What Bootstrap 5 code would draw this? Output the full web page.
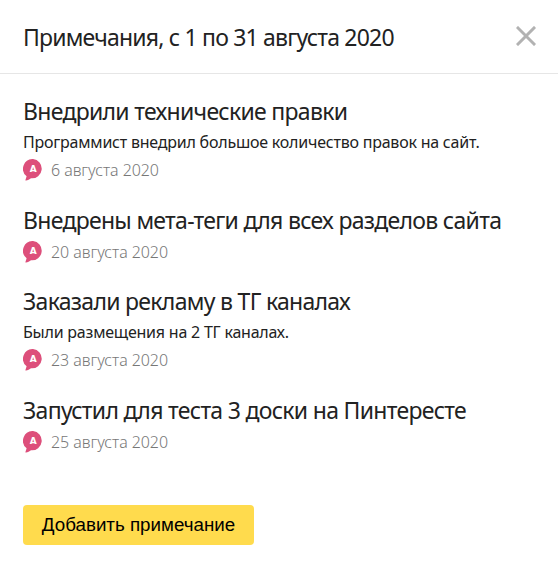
<!DOCTYPE html>
<html lang="ru">
<head>
<meta charset="utf-8">
<meta name="viewport" content="width=device-width, initial-scale=1">
<title>Примечания</title>
<link href="https://cdn.jsdelivr.net/npm/bootstrap@5.3.0/dist/css/bootstrap.min.css" rel="stylesheet">
<style>
body { font-family: "Noto Sans", "Open Sans", sans-serif; color: #222; background: #fff; }
.notes-header { height: 74px; padding: 0 22px 2px 23px; border-bottom: 1px solid #e6e6e6; }
.notes-title, .note-title { font-size: 23px; font-weight: 400; line-height: 30px; white-space: nowrap; letter-spacing: -.8px; }
.notes-title { padding-top: 2px; }
.note-title { letter-spacing: -.7px; margin-bottom: 3px; }
.notes-list { padding: 22px 23px 0; }
.note { padding-bottom: 20.5px; }
.note-text { font-size: 16px; line-height: 27px; letter-spacing: -.22px; white-space: nowrap; }
.note-date { font-size: 16px; line-height: 28px; font-weight: 300; color: #777; letter-spacing: -.06px; }
.close-btn { width: 20px; height: 20px; }
.add-btn { height: 40px; width: 231px; margin-top: 29px; border-radius: 4px; background: #ffdb4d; font: 18.750px/40px "Liberation Sans", Arial, sans-serif; color: #000; }
</style>
</head>
<body>
<header class="notes-header d-flex align-items-center justify-content-between">
  <h1 class="notes-title mb-0">Примечания, с 1 по 31 августа 2020</h1>
  <button class="close-btn btn p-0 border-0 d-flex" aria-label="Закрыть"><svg width="20" height="20" viewBox="0 0 20 20" stroke="#b2b2b2" stroke-width="3"><path d="M2 2l16 16M18 2l-16 16" stroke-linecap="square"/></svg></button>
</header>
<svg class="d-none"><symbol id="pin" viewBox="0 0 20 22"><path fill="#dd4f7b" d="M10 0a9.700 9.700 0 1 1-2 19.300C6.500 20.500 4.800 21.300 3 21.600c-.7 0-.7-.5-.4-1L3.600 17.200A9.700 9.700 0 0 1 10 0z"/><text x="10.200" y="13.200" text-anchor="middle" font-family="DejaVu Sans" font-size="9" font-weight="700" letter-spacing="0" fill="#fff">А</text></symbol></svg>
<main class="notes-list">
  <article class="note">
    <h2 class="note-title">Внедрили технические правки</h2>
    <div class="note-text">Программист внедрил большое количество правок на сайт.</div>
    <div class="note-date d-flex align-items-center gap-2"><svg width="20" height="22"><use href="#pin"/></svg>6 августа 2020</div>
  </article>
  <article class="note">
    <h2 class="note-title">Внедрены мета-теги для всех разделов сайта</h2>
    <div class="note-date d-flex align-items-center gap-2"><svg width="20" height="22"><use href="#pin"/></svg>20 августа 2020</div>
  </article>
  <article class="note">
    <h2 class="note-title">Заказали рекламу в ТГ каналах</h2>
    <div class="note-text">Были размещения на 2 ТГ каналах.</div>
    <div class="note-date d-flex align-items-center gap-2"><svg width="20" height="22"><use href="#pin"/></svg>23 августа 2020</div>
  </article>
  <article class="note">
    <h2 class="note-title">Запустил для теста 3 доски на Пинтересте</h2>
    <div class="note-date d-flex align-items-center gap-2"><svg width="20" height="22"><use href="#pin"/></svg>25 августа 2020</div>
  </article>
  <button class="add-btn btn border-0 p-0">Добавить примечание</button>
</main>
<script src="https://cdn.jsdelivr.net/npm/bootstrap@5.3.0/dist/js/bootstrap.bundle.min.js"></script>
</body>
</html>
